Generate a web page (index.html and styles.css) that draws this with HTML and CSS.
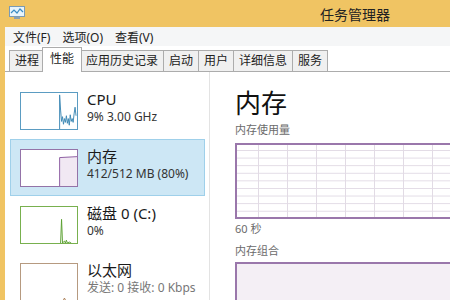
FILE: index.html
```html
<!DOCTYPE html>
<html lang="zh-CN">
<head>
  <meta charset="UTF-8" />
  <title>任务管理器</title>
  <link rel="stylesheet" href="styles.css">
</head>
<body>
  <div class="titlebar">
    <svg class="app-icon" width="16" height="13" viewBox="0 0 16 13">
      <rect x="0.5" y="0.5" width="15" height="10" fill="#e8f4fb" stroke="#7a9bb5"/>
      <polyline points="2,7 5,4 8,7 11,3 14,6" fill="none" stroke="#3a8cc4" stroke-width="1.2"/>
      <rect x="5" y="11" width="6" height="2" fill="#8aa0b0"/>
    </svg>
    <span class="title">任务管理器</span>
  </div>

  <div class="frame">
    <div class="menubar">
      <span>文件(F)</span>
      <span>选项(O)</span>
      <span>查看(V)</span>
    </div>

    <div class="tabs">
      <div class="tab">进程</div>
      <div class="tab active">性能</div>
      <div class="tab">应用历史记录</div>
      <div class="tab">启动</div>
      <div class="tab">用户</div>
      <div class="tab">详细信息</div>
      <div class="tab">服务</div>
    </div>

    <div class="content">
      <div class="sidebar">
        <div class="item">
          <svg class="thumb cpu" viewBox="0 0 58 38" preserveAspectRatio="none">
            <polyline points="40,38 40,2 41,18 42,30 43,25 44,33 45,27 46,31 47,24 48,32 49,27 50,34 51,23 52,30 53,27 54,31 55,22 56,15 57,24"/>
          </svg>
          <div class="info">
            <div class="name">CPU</div>
            <div class="sub">9% 3.00 GHz</div>
          </div>
        </div>

        <div class="item selected">
          <svg class="thumb mem" viewBox="0 0 58 38" preserveAspectRatio="none">
            <polygon class="fill" points="40,38 40,8 58,7 58,38"/>
            <polyline points="40,38 40,8 58,7"/>
          </svg>
          <div class="info">
            <div class="name">内存</div>
            <div class="sub">412/512 MB (80%)</div>
          </div>
        </div>

        <div class="item">
          <svg class="thumb disk" viewBox="0 0 58 38" preserveAspectRatio="none">
            <polyline points="41,38 42,13 43,38 45,36 46,38 47,35 48,38 50,37 52,38"/>
          </svg>
          <div class="info">
            <div class="name">磁盘 0 (C:)</div>
            <div class="sub">0%</div>
          </div>
        </div>

        <div class="item">
          <svg class="thumb net" viewBox="0 0 58 38" preserveAspectRatio="none">
            <polyline points="44,38 45,36 46,38"/>
          </svg>
          <div class="info">
            <div class="name">以太网</div>
            <div class="sub muted">发送: 0 接收: 0 Kbps</div>
          </div>
        </div>
      </div>

      <div class="detail">
        <h2>内存</h2>
        <div class="label">内存使用量</div>
        <div class="chart grid"></div>
        <div class="label">60 秒</div>
        <div class="label gap">内存组合</div>
        <div class="chart combo"></div>
      </div>
    </div>
  </div>
</body>
</html>
```

FILE: styles.css
```css
* { box-sizing: border-box; }
html, body {
  margin: 0;
  width: 450px;
  height: 300px;
  overflow: hidden;
}
body {
  background: #f0c463;
  font-family: "Segoe UI", "Noto Sans", "Noto Sans CJK SC", sans-serif;
  color: #000;
  display: flex;
  flex-direction: column;
}
.titlebar {
  height: 27px;
  display: flex;
  align-items: center;
  flex-shrink: 0;
}
.app-icon {
  margin-left: 9px;
  margin-top: -2px;
}
.title {
  margin-left: 295px;
  font-size: 14px;
  color: #222;
}
.frame {
  flex: 1;
  margin-left: 5px;
  background: #fff;
  display: flex;
  flex-direction: column;
  min-height: 0;
}
.menubar {
  height: 19px;
  background: #f5f6f7;
  display: flex;
  align-items: center;
  gap: 12px;
  padding-left: 8px;
  font-size: 12px;
  color: #222;
  flex-shrink: 0;
}
.tabs {
  height: 26px;
  display: flex;
  align-items: flex-end;
  padding-left: 4px;
  border-bottom: 1px solid #acacac;
  flex-shrink: 0;
}
.tab {
  height: 21px;
  padding: 0 5px;
  font-size: 12px;
  line-height: 20px;
  color: #222;
  background: #f0f0f0;
  border: 1px solid #acacac;
  border-bottom: none;
  margin-right: -1px;
}
.tab.active {
  height: 25px;
  background: #fff;
  margin: 0 -2px -1px -2px;
  padding: 0 7px;
  line-height: 22px;
  position: relative;
  z-index: 1;
}
.content {
  flex: 1;
  display: flex;
  min-height: 0;
}
.sidebar {
  width: 205px;
  padding: 10px 4px 0 5px;
  border-right: 1px solid #e3e3e3;
  flex-shrink: 0;
}
.item {
  height: 57px;
  display: flex;
  align-items: flex-start;
  padding: 9px 9px;
  border: 1px solid transparent;
}
.item.selected {
  background: #cde7f5;
  border-color: #9fd0ea;
}
.thumb {
  width: 58px;
  height: 38px;
  background: #fff;
  border: 1px solid;
  flex-shrink: 0;
}
.thumb polyline {
  fill: none;
  stroke-width: 1;
}
.cpu { border-color: #5b9cc2; }
.cpu polyline { stroke: #3d88b4; }
.mem { border-color: #9473a8; }
.mem polyline { stroke: #8b5aa0; }
.mem .fill { fill: #f1e8f3; }
.disk { border-color: #78b04e; }
.disk polyline { stroke: #5aa030; }
.net { border-color: #b69a80; }
.net polyline { stroke: #a77a50; }
.info {
  margin-left: 9px;
  margin-top: -3px;
  white-space: nowrap;
}
.name {
  font-size: 15px;
  line-height: 20px;
  color: #1a1a1a;
}
.sub {
  font-size: 12px;
  line-height: 16px;
  color: #333;
}
.sub.muted {
  color: #777;
}
.detail {
  flex: 1;
  padding: 14px 0 0 25px;
  min-width: 0;
}
.detail h2 {
  margin: 0;
  font-size: 26px;
  font-weight: normal;
  line-height: 34px;
  color: #111;
}
.label {
  font-size: 11px;
  line-height: 15px;
  color: #6b6b6b;
  margin-top: 2px;
}
.label.gap {
  margin-top: 7px;
}
.chart {
  width: 100%;
  border: 2px solid #9a77ab;
  border-right: none;
}
.grid {
  height: 76px;
  margin-top: 6px;
  background-color: #fff;
  background-image:
    linear-gradient(to right, #e2dbe5 1px, transparent 1px),
    linear-gradient(to bottom, #e2dbe5 1px, transparent 1px);
  background-size: 29px 7.6px;
  background-position: 21px 5px;
}
.combo {
  height: 50px;
  margin-top: 4px;
  background: #f4eff5;
}
```
